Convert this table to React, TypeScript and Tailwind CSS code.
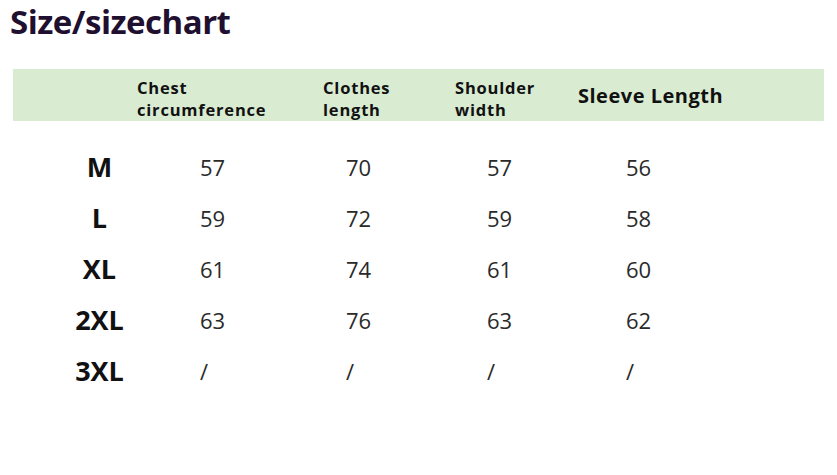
const rows = [
  { size: 'M', values: ['57', '70', '57', '56'] },
  { size: 'L', values: ['59', '72', '59', '58'] },
  { size: 'XL', values: ['61', '74', '61', '60'] },
  { size: '2XL', values: ['63', '76', '63', '62'] },
  { size: '3XL', values: ['/', '/', '/', '/'] },
];

const valueCols = ['w-[146px]', 'w-[141px]', 'w-[139px]', 'w-[140px]'];

export default function App() {
  return (
    <div className="w-[837px] h-[475px] bg-white overflow-hidden font-['Open_Sans',sans-serif]">
      <h1 className="pl-[10px] text-[33px] leading-[44px] font-bold tracking-[-0.5px] text-[#1f1030]">
        Size/sizechart
      </h1>

      <div className="ml-[13px] mt-[25px] w-[811px] h-[52px] bg-[#d9ecd2] flex items-center text-[#111] font-bold">
        <div className="w-[124px]" />
        <div className="w-[186px] text-[16.5px] leading-[22px] tracking-[0.8px] pt-[7px]">
          Chest
          <br />
          circumference
        </div>
        <div className="w-[132px] text-[16.5px] leading-[22px] tracking-[0.8px] pt-[7px]">
          Clothes
          <br />
          length
        </div>
        <div className="w-[123px] text-[16.5px] leading-[22px] tracking-[0.8px] pt-[7px]">
          Shoulder
          <br />
          width
        </div>
        <div className="text-[20px] leading-[24px] tracking-[0.5px] pt-[1px]">Sleeve Length</div>
      </div>

      <div className="mt-[21px] flex flex-col">
        {rows.map((row) => (
          <div key={row.size} className="flex items-center h-[51px]">
            <div className="ml-[13px] w-[187px] text-center text-[27px] font-bold text-[#111] pr-[14px]">
              {row.size}
            </div>
            {row.values.map((v, i) => (
              <div key={i} className={`${valueCols[i]} text-[22px] text-[#2a2a2a]`}>
                {v}
              </div>
            ))}
          </div>
        ))}
      </div>
    </div>
  );
}
